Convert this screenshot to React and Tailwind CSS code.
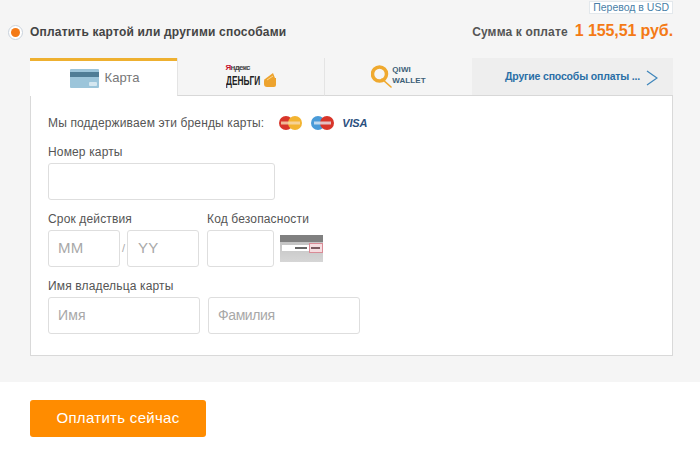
const font = { fontFamily: '"Liberation Sans", Arial, sans-serif' };

function Field({ className = "", placeholder = "" }) {
  return (
    <div className={`h-[37px] bg-white border border-[#dedede] rounded-[3px] flex items-center text-[14px] text-[#a8a8a8] ${className}`}>
      {placeholder}
    </div>
  );
}

function CardIcon() {
  return (
    <svg width="29" height="19" viewBox="0 0 29 19">
      <rect width="29" height="19" rx="1" fill="#9cc5da" />
      <rect y="3" width="29" height="5" fill="#4f7d96" />
      <rect x="19" y="13" width="8" height="4" rx="1" fill="#d5e7f0" />
    </svg>
  );
}

function YandexLogo() {
  return (
    <div className="flex flex-col leading-none w-[51px] -mt-[2px]">
      <span className="text-[8px] font-bold tracking-[-0.7px] text-[#444] leading-[8px]"><span className="text-[#c8102e]">Я</span>ндекс</span>
      <div className="flex items-end justify-between">
        <span className="text-[13px] font-bold text-[#222] leading-[13px] uppercase origin-left scale-x-[0.64] inline-block w-[35px] whitespace-nowrap">Деньги</span>
        <svg width="13" height="15" viewBox="0 0 13 15">
          <path d="M1 7 L9 1 L11 6 L12 6 L12 13 Q12 15 10 15 L3 15 Q0 15 0 12 L0 9 Q0 7 1 7Z" fill="#eda32e" />
          <path d="M3 8 L9 4" stroke="#fbd58a" strokeWidth="1" />
        </svg>
      </div>
    </div>
  );
}

function QiwiLogo() {
  return (
    <div className="flex items-center mt-[1px]">
      <svg width="21" height="24" viewBox="0 0 21 24">
        <circle cx="8.5" cy="9" r="7" fill="none" stroke="#efa92f" strokeWidth="3.5" />
        <path d="M11 14 L20 22" stroke="#efa92f" strokeWidth="1.6" strokeLinecap="round" />
      </svg>
      <div className="flex flex-col text-[8px] text-[#3c5f78] font-bold tracking-[0.1px] leading-[11px] -mt-[5px]">
        <span>QIWI</span>
        <span>WALLET</span>
      </div>
    </div>
  );
}

function Brands() {
  return (
    <div className="flex items-center ml-[15px]">
      <svg width="23" height="14" viewBox="0 0 23 14">
        <circle cx="7" cy="7" r="7" fill="#d8352a" />
        <circle cx="16" cy="7" r="7" fill="#f3b431" />
        <rect x="2" y="5.5" width="19" height="3" fill="#f6d9b0" opacity="0.8" />
      </svg>
      <svg width="23" height="14" viewBox="0 0 23 14" className="ml-[9px]">
        <circle cx="7" cy="7" r="7" fill="#4a9bd8" />
        <circle cx="16" cy="7" r="7" fill="#d8352a" />
        <rect x="3" y="5.5" width="17" height="3" fill="#e8eef5" opacity="0.75" />
      </svg>
      <span className="ml-[8px] text-[11px] font-bold italic text-[#2b4f7e] tracking-[-0.2px]">VISA</span>
    </div>
  );
}

function CvvCard() {
  return (
    <svg width="43" height="27" viewBox="0 0 43 27" className="ml-[6px] mt-[5px] shrink-0">
      <defs>
        <linearGradient id="cvvbg" x1="0" y1="0" x2="0" y2="1">
          <stop offset="0" stopColor="#bdbdbd" />
          <stop offset="1" stopColor="#d6d6d6" />
        </linearGradient>
      </defs>
      <rect width="43" height="27" fill="url(#cvvbg)" />
      <rect width="43" height="7" fill="#808080" />
      <rect x="2" y="10" width="39" height="6" fill="#ffffff" />
      <rect x="15" y="12" width="12" height="2" fill="#666" />
      <rect x="29.5" y="8.5" width="13" height="9" fill="#f5dde0" stroke="#d98b96" strokeWidth="1" />
      <rect x="31" y="12" width="9" height="2" fill="#7d5a60" />
    </svg>
  );
}

export default function App() {
  return (
    <div style={font} className="w-[700px] h-[449px] bg-white overflow-hidden">
      <div className="h-[382px] bg-[#f5f5f5] flex flex-col">
        <div className="h-[58px] flex justify-between pr-[27px]">
          <div className="flex items-start pl-[8px] pt-[25px]">
            <div className="w-[15px] h-[15px] rounded-full bg-white border border-[#c9d2dc] flex items-center justify-center">
              <div className="w-[9px] h-[9px] rounded-full bg-[#f47a16]" />
            </div>
            <span className="ml-[7px] text-[12px] leading-[15px] font-bold text-[#444] tracking-[0.2px]">Оплатить картой или другими способами</span>
          </div>
          <div className="flex flex-col items-end pt-[1px]">
            <div className="h-[13px] px-[3px] bg-white border border-[#e3e8ec] text-[10.5px] leading-[11px] text-[#4a7fa8]">Перевод в USD</div>
            <div className="flex items-baseline mt-[5px]">
              <span className="text-[12px] font-bold text-[#555] tracking-[0.15px]">Сумма к оплате</span>
              <span className="ml-[7px] text-[16px] font-bold text-[#f47a16] tracking-[-0.1px]">1 155,51 руб.</span>
            </div>
          </div>
        </div>

        <div className="ml-[30px] w-[643px] flex flex-col">
          <div className="flex h-[38px]">
            <div className="w-[147px] bg-white border-t-[3px] border-[#eeb030] flex items-center justify-center gap-[6px] pb-[1px] pl-[2px]">
              <CardIcon />
              <span className="text-[13px] text-[#777]">Карта</span>
            </div>
            <div className="w-[148px] border-l border-r border-b border-[#e4e4e4] border-b-[#d8d8d8] flex items-center justify-center">
              <YandexLogo />
            </div>
            <div className="w-[147px] border-b border-[#d8d8d8] flex items-center justify-center">
              <QiwiLogo />
            </div>
            <div className="w-[201px] bg-[#eeeeee] border-b border-[#d8d8d8] flex items-center pl-[33px]">
              <span className="text-[10.5px] font-bold text-[#2a6ea6] tracking-[-0.17px]">Другие способы оплаты ...</span>
              <svg width="12" height="16" viewBox="0 0 12 16" className="ml-[6px] mt-[3px]">
                <path d="M1 1 L11 8 L1 15" fill="none" stroke="#3f86bb" strokeWidth="1.3" />
              </svg>
            </div>
          </div>

          <div className="h-[260px] bg-white border-l border-r border-b border-[#d9d9d9] pl-[17px] pt-[20px] text-[12px] text-[#555] tracking-[0.15px]">
            <div className="flex items-center h-[14px]">
              <span>Мы поддерживаем эти бренды карты:</span>
              <Brands />
            </div>
            <div className="mt-[15px] h-[14px] leading-[14px]">Номер карты</div>
            <Field className="w-[227px] mt-[4px]" />

            <div className="flex mt-[12px] h-[14px] leading-[14px]">
              <span className="w-[159px]">Срок действия</span>
              <span>Код безопасности</span>
            </div>
            <div className="flex mt-[4px]">
              <Field className="w-[72px] pl-[9px] !text-[15px]" placeholder="MM" />
              <span className="w-[7px] text-center text-[#aaa] text-[11px] leading-[37px]">/</span>
              <Field className="w-[72px] pl-[10px] !text-[15px]" placeholder="YY" />
              <Field className="w-[67px] ml-[8px]" />
              <CvvCard />
            </div>

            <div className="mt-[12px] h-[14px] leading-[14px]">Имя владельца карты</div>
            <div className="flex mt-[4px]">
              <Field className="w-[152px] pl-[9px]" placeholder="Имя" />
              <Field className="w-[152px] ml-[8px] pl-[9px] tracking-[-0.4px]" placeholder="Фамилия" />
            </div>
          </div>
        </div>
      </div>

      <div className="pl-[30px] pt-[18px]">
        <button className="w-[176px] h-[37px] bg-[#ff8c00] rounded-[3px] text-white text-[15px] tracking-[0.3px]">Оплатить сейчас</button>
      </div>
    </div>
  );
}
